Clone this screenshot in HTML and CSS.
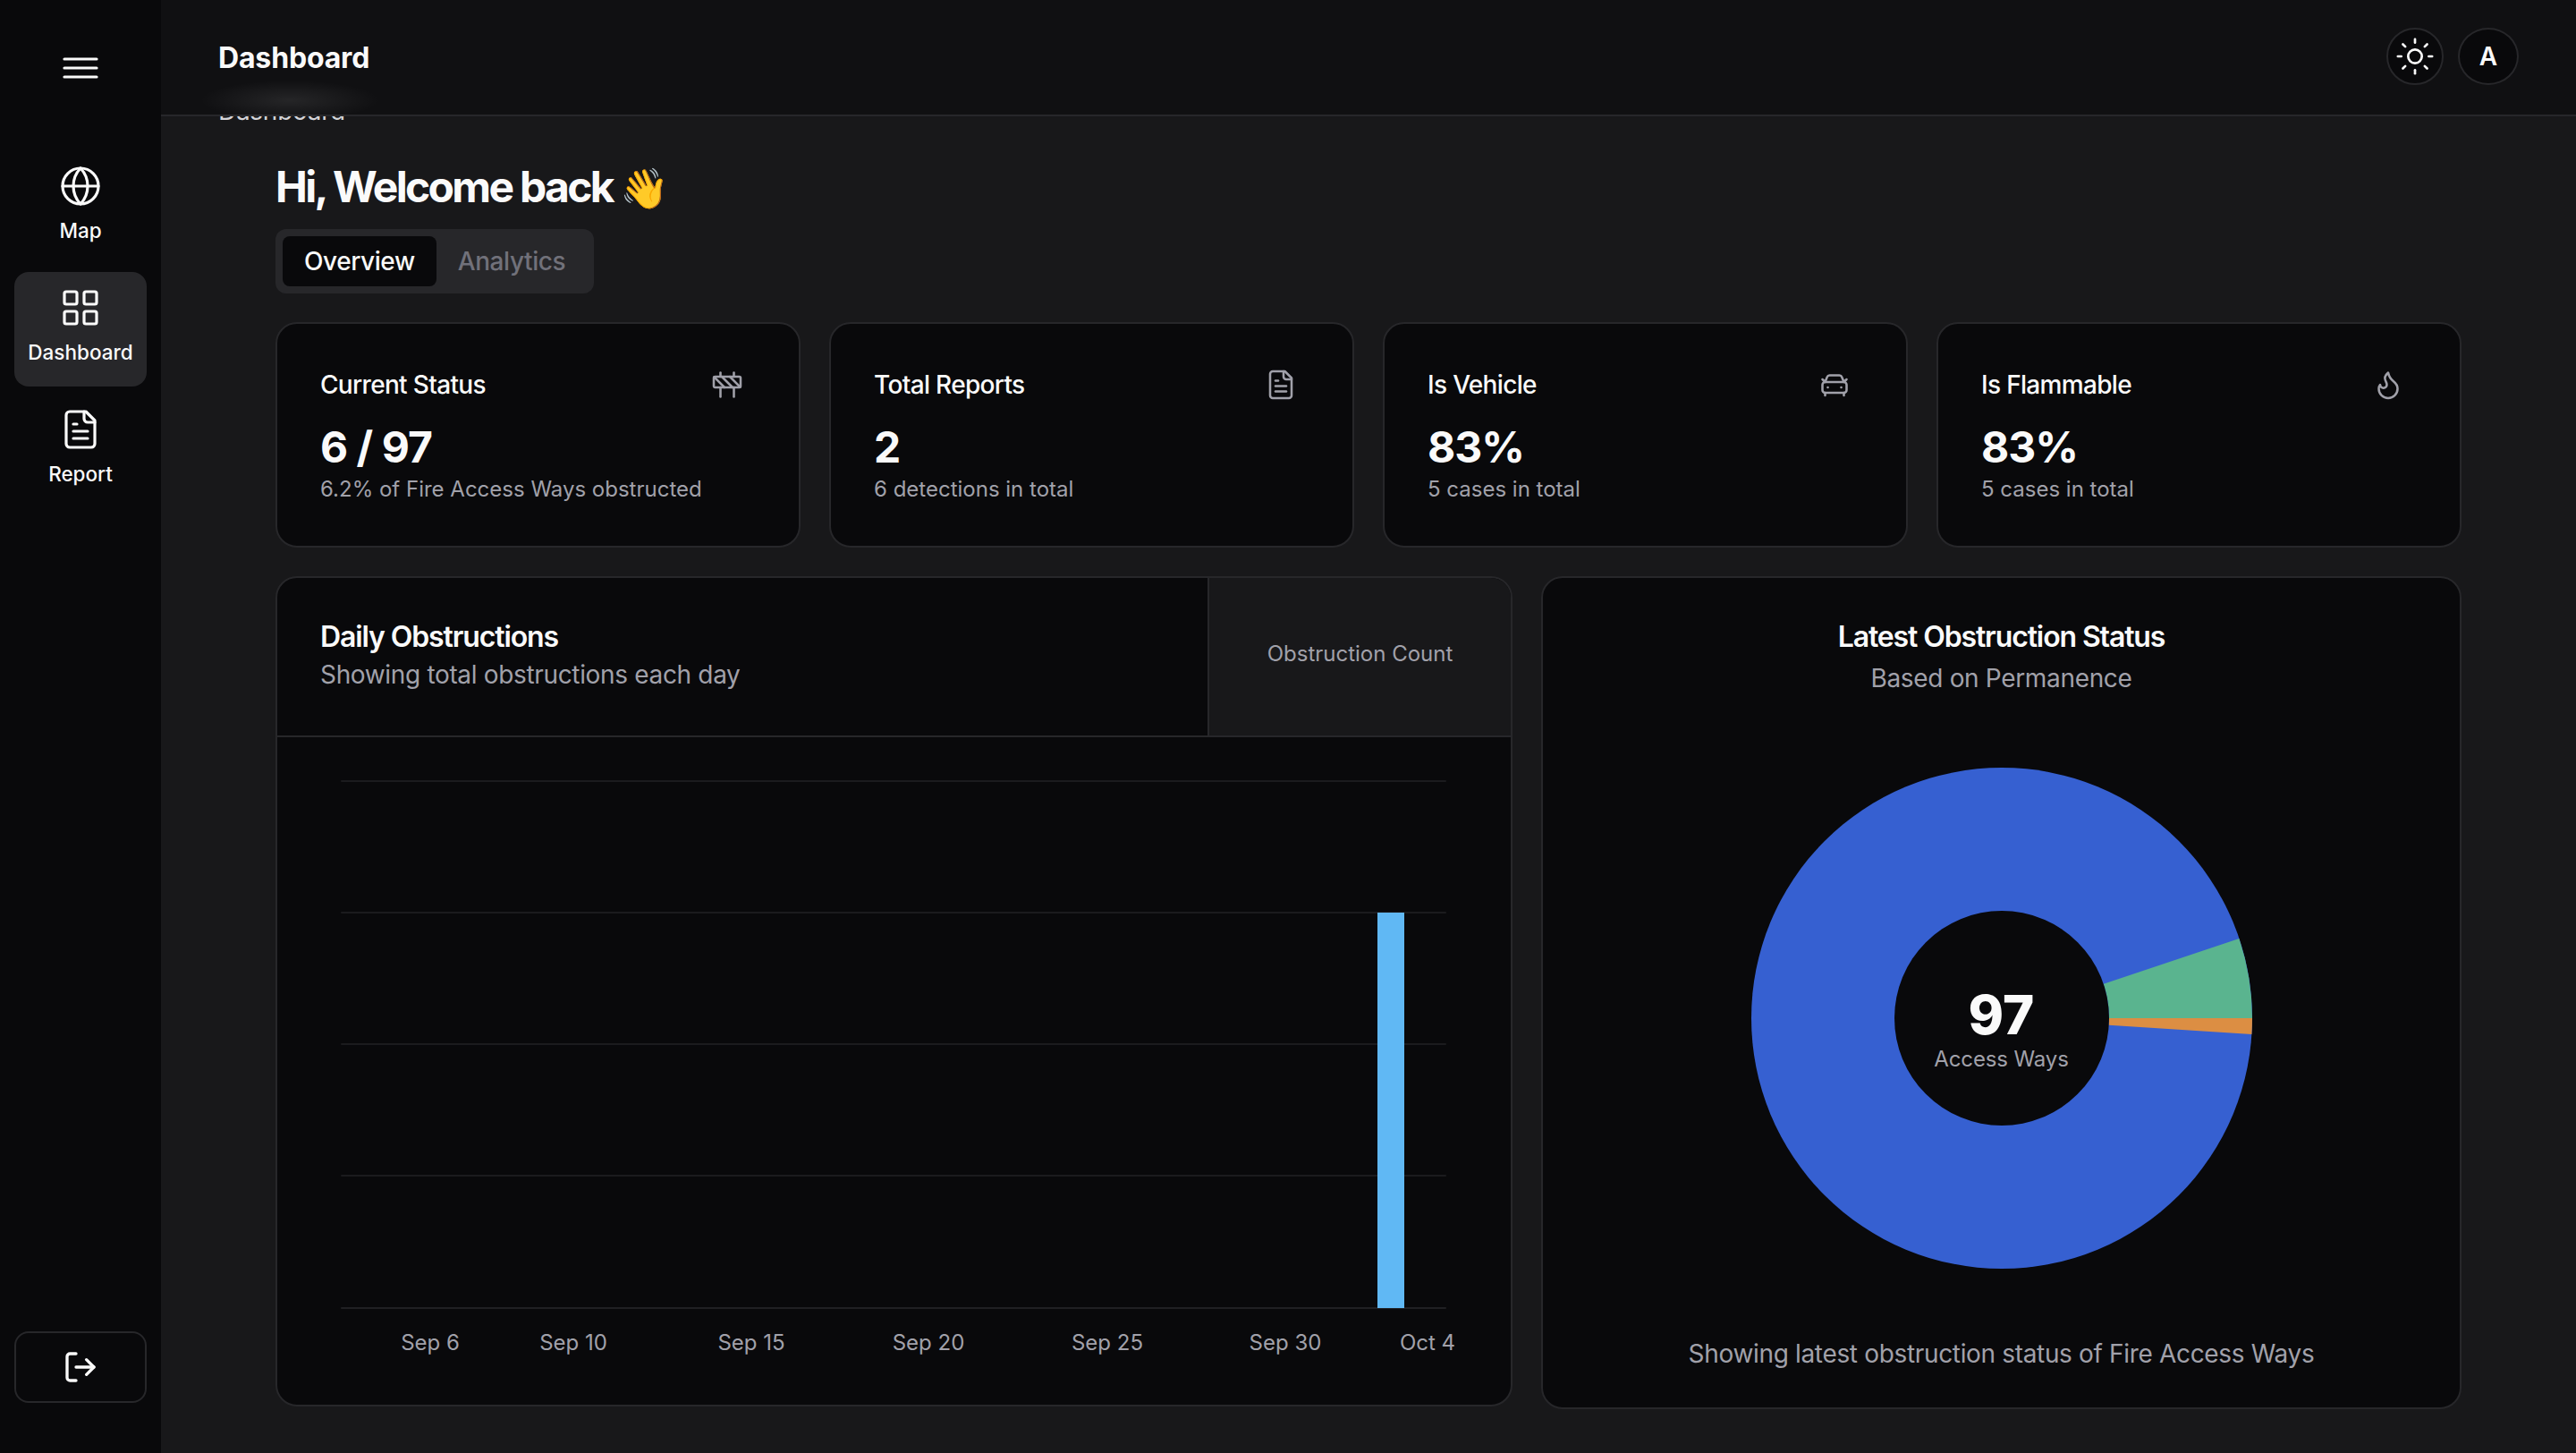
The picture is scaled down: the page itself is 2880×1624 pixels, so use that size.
FILE: index.html
```html
<!DOCTYPE html>
<html lang="en">
<head>
<meta charset="utf-8">
<title>Dashboard</title>
<link rel="stylesheet" href="styles.css">
</head>
<body>
<div class="app">
  <aside class="sidebar">
    <button class="menu-btn" aria-label="Menu">
      <svg class="icon-48" viewBox="0 0 24 24"><path d="M3 7h18M3 12h18M3 17h18"/></svg>
    </button>
    <nav class="nav">
      <a class="nav-item">
        <svg class="icon-48" viewBox="0 0 24 24"><circle cx="12" cy="12" r="10"/><path d="M12 2a14.5 14.5 0 0 0 0 20 14.5 14.5 0 0 0 0-20"/><path d="M2 12h20"/></svg>
        <span>Map</span>
      </a>
      <a class="nav-item active">
        <svg class="icon-48" viewBox="0 0 24 24"><rect width="7" height="7" x="3" y="3" rx="1"/><rect width="7" height="7" x="14" y="3" rx="1"/><rect width="7" height="7" x="14" y="14" rx="1"/><rect width="7" height="7" x="3" y="14" rx="1"/></svg>
        <span>Dashboard</span>
      </a>
      <a class="nav-item">
        <svg class="icon-48" viewBox="0 0 24 24"><path d="M15 2H6a2 2 0 0 0-2 2v16a2 2 0 0 0 2 2h12a2 2 0 0 0 2-2V7Z"/><path d="M14 2v4a2 2 0 0 0 2 2h4"/><path d="M10 9H8"/><path d="M16 13H8"/><path d="M16 17H8"/></svg>
        <span>Report</span>
      </a>
    </nav>
    <button class="logout" aria-label="Log out">
      <svg class="icon-40" viewBox="0 0 24 24"><path d="M9 21H5a2 2 0 0 1-2-2V5a2 2 0 0 1 2-2h4"/><path d="m16 17 5-5-5-5"/><path d="M21 12H9"/></svg>
    </button>
  </aside>

  <main class="main">
    <header class="topbar">
      <h2 class="topbar-title">Dashboard</h2>
      <div class="topbar-actions">
        <button class="round-btn sun" aria-label="Theme">
          <svg class="icon-46" viewBox="0 0 24 24"><circle cx="12" cy="12" r="4"/><path d="M12 2v2"/><path d="M12 20v2"/><path d="m4.93 4.93 1.41 1.41"/><path d="m17.66 17.66 1.41 1.41"/><path d="M2 12h2"/><path d="M20 12h2"/><path d="m6.34 17.66-1.41 1.41"/><path d="m19.07 4.93-1.41 1.41"/></svg>
        </button>
        <button class="round-btn avatar">A</button>
      </div>
    </header>

    <div class="crumb"><span class="crumb-text">Dashboard</span></div>

    <div class="page">
      <h1 class="welcome">Hi, Welcome back <span class="wave">👋</span></h1>

      <div class="tabs">
        <span class="tab active">Overview</span>
        <span class="tab">Analytics</span>
      </div>

      <section class="stats">
        <article class="stat">
          <div class="stat-head">
            <h3>Current Status</h3>
            <svg class="icon-36" viewBox="0 0 24 24"><rect x="2" y="6" width="20" height="8" rx="1"/><path d="M17 14v7"/><path d="M7 14v7"/><path d="M17 3v3"/><path d="M7 3v3"/><path d="M10 14 2.3 6.3"/><path d="m14 6 7.7 7.7"/><path d="m8 6 8 8"/></svg>
          </div>
          <div class="stat-value">6 / 97</div>
          <p class="stat-note">6.2% of Fire Access Ways obstructed</p>
        </article>
        <article class="stat">
          <div class="stat-head">
            <h3>Total Reports</h3>
            <svg class="icon-36" viewBox="0 0 24 24"><path d="M15 2H6a2 2 0 0 0-2 2v16a2 2 0 0 0 2 2h12a2 2 0 0 0 2-2V7Z"/><path d="M14 2v4a2 2 0 0 0 2 2h4"/><path d="M10 9H8"/><path d="M16 13H8"/><path d="M16 17H8"/></svg>
          </div>
          <div class="stat-value">2</div>
          <p class="stat-note">6 detections in total</p>
        </article>
        <article class="stat">
          <div class="stat-head">
            <h3>Is Vehicle</h3>
            <svg class="icon-36" viewBox="0 0 24 24"><path d="m21 8-2 2-1.5-3.7A2 2 0 0 0 15.646 5H8.4a2 2 0 0 0-1.903 1.257L5 10 3 8"/><path d="M7 14h.01"/><path d="M17 14h.01"/><rect width="18" height="8" x="3" y="10" rx="2"/><path d="M5 18v2"/><path d="M19 18v2"/></svg>
          </div>
          <div class="stat-value">83%</div>
          <p class="stat-note">5 cases in total</p>
        </article>
        <article class="stat">
          <div class="stat-head">
            <h3>Is Flammable</h3>
            <svg class="icon-36" viewBox="0 0 24 24"><path d="M8.5 14.5A2.5 2.5 0 0 0 11 12c0-1.38-.5-2-1-3-1.072-2.143-.224-4.054 2-6 .5 2.5 2 4.9 4 6.5 2 1.6 3 3.5 3 5.5a7 7 0 1 1-14 0c0-1.153.433-2.294 1-3a2.5 2.5 0 0 0 2.5 2.5z"/></svg>
          </div>
          <div class="stat-value">83%</div>
          <p class="stat-note">5 cases in total</p>
        </article>
      </section>

      <section class="charts">
        <article class="card bar-card">
          <div class="bar-head">
            <div class="bar-titles">
              <h3 class="card-title">Daily Obstructions</h3>
              <p class="card-sub">Showing total obstructions each day</p>
            </div>
            <div class="series-tab">Obstruction Count</div>
          </div>
          <svg class="bar-chart" viewBox="0 0 1379 745">
            <g class="grid-lines">
              <path d="M72 49H1306"/><path d="M72 196H1306"/><path d="M72 343H1306"/><path d="M72 490H1306"/>
              <path class="axis" d="M72 638H1306"/>
            </g>
            <rect class="bar" x="1230" y="196" width="30" height="442"/>
            <g class="ticks">
              <text x="171" y="685">Sep 6</text>
              <text x="331" y="685">Sep 10</text>
              <text x="530" y="685">Sep 15</text>
              <text x="728" y="685">Sep 20</text>
              <text x="928" y="685">Sep 25</text>
              <text x="1127" y="685">Sep 30</text>
              <text x="1286" y="685">Oct 4</text>
            </g>
          </svg>
        </article>

        <article class="card pie-card">
          <h3 class="card-title">Latest Obstruction Status</h3>
          <p class="card-sub">Based on Permanence</p>
          <div class="pie-wrap">
            <svg class="pie" viewBox="0 0 560 560">
              <circle class="slice-blue" cx="280" cy="280" r="280"/>
              <path class="slice-green" d="M560 280A280 280 0 0 0 545.4 190.9L393.8 241.8A120 120 0 0 1 400 280Z"/>
              <path class="slice-orange" d="M560 280A280 280 0 0 1 559.4 298.1L399.7 287.8A120 120 0 0 0 400 280Z"/>
              <circle class="pie-hole" cx="280" cy="280" r="120"/>
            </svg>
            <div class="pie-label">
              <strong>97</strong>
              <span>Access Ways</span>
            </div>
          </div>
          <p class="pie-foot">Showing latest obstruction status of Fire Access Ways</p>
        </article>
      </section>
    </div>
  </main>
</div>
</body>
</html>
```
FILE: styles.css
```css
* { box-sizing: border-box; }
html, body { margin: 0; padding: 0; height: 100%; }
body { background: #18181a; color: #fafafa; font-family: Inter, "Noto Sans", "Noto Color Emoji", sans-serif; overflow: hidden; }
h1, h2, h3, p { margin: 0; }
button { font-family: inherit; color: inherit; padding: 0; cursor: pointer; }

svg { fill: none; stroke: currentColor; stroke-linecap: round; stroke-linejoin: round; stroke-width: 1.6; display: block; flex: none; }
.icon-48 { width: 48px; height: 48px; }
.icon-46 { width: 46px; height: 46px; stroke-width: 1.4; }
.icon-40 { width: 40px; height: 40px; stroke-width: 2; }
.icon-36 { width: 36px; height: 36px; color: #a1a1aa; stroke-width: 1.7; }

.app { display: flex; width: 2880px; height: 1624px; overflow: hidden; }

.sidebar { width: 180px; flex: none; background: #09090b; display: flex; flex-direction: column; align-items: center; padding: 52px 16px 56px; }
.menu-btn { background: none; border: 0; height: 48px; width: 48px; color: #fafafa; }
.nav { display: flex; flex-direction: column; gap: 8px; width: 148px; margin-top: 68px; flex: 1; }
.nav-item { height: 128px; border-radius: 16px; display: flex; flex-direction: column; align-items: center; gap: 12px; padding-top: 16px; font-size: 22.5px; font-weight: 500; line-height: 28px; color: #fafafa; }
.nav-item.active { background: #27272a; }
.logout { width: 148px; height: 80px; border: 2px solid #27272a; border-radius: 16px; background: #09090b; display: flex; align-items: center; justify-content: center; color: #fafafa; }

.main { flex: 1; position: relative; background: #18181a; min-width: 0; }
.topbar { position: absolute; top: 0; left: 0; right: 0; height: 130px; border-bottom: 2px solid #27272a; background: #101012; display: flex; align-items: center; justify-content: space-between; padding: 0 64px 2px; z-index: 2; }
.topbar::after { content: ""; position: absolute; left: 44px; bottom: -6px; width: 200px; height: 44px; background: radial-gradient(closest-side, rgba(255, 255, 255, .09), rgba(255, 255, 255, 0)); pointer-events: none; clip-path: inset(0 0 6px 0); }
.topbar-title { margin-top: 4px; font-size: 32px; font-weight: 700; letter-spacing: -.005em; line-height: 44px; }
.topbar-actions { display: flex; gap: 16px; }
.round-btn { height: 64px; border: 2px solid #27272a; border-radius: 50%; background: #09090b; display: flex; align-items: center; justify-content: center; color: #fafafa; }
.sun { width: 64px; }
.avatar { width: 68px; font-size: 28px; font-weight: 600; }

.crumb { margin-top: 130px; height: 14px; overflow: hidden; padding-left: 64px; }
.crumb-text { display: block; margin-top: -26px; font-size: 28px; line-height: 40px; color: #d4d4d8; letter-spacing: -.01em; }

.page { padding: 0 128px; }
.welcome { margin-top: 35px; font-size: 48px; line-height: 60px; font-weight: 700; letter-spacing: -.056em; }
.wave { letter-spacing: 0; font-size: 44px; }

.tabs { display: inline-flex; align-items: center; height: 72px; padding: 8px; margin-top: 16px; border-radius: 12px; background: #27272a; font-size: 28px; font-weight: 500; color: #71717a; vertical-align: top; letter-spacing: -.015em; }
.tab { height: 56px; padding: 0 24px; line-height: 56px; border-radius: 8px; }
.tab.active { background: #09090b; color: #fafafa; }

.stats { display: grid; grid-template-columns: repeat(4, 1fr); gap: 32px; margin-top: 32px; }
.stat { height: 252px; background: #09090b; border: 2px solid #27272a; border-radius: 24px; padding: 48px 62px 0 48px; }
.stat-head { display: flex; justify-content: space-between; align-items: center; height: 40px; }
.stat-head h3 { font-size: 28px; line-height: 40px; font-weight: 500; letter-spacing: -.024em; }
.stat-value { margin-top: 22px; font-size: 48px; line-height: 56px; font-weight: 700; letter-spacing: -.02em; }
.stat-note { margin-top: 3px; font-size: 24px; line-height: 32px; color: #a1a1aa; }

.charts { display: grid; grid-template-columns: 1383px 1fr; gap: 32px; margin-top: 32px; align-items: start; }
.card { background: #09090b; border: 2px solid #27272a; border-radius: 24px; overflow: hidden; }
.bar-card { height: 928px; }
.bar-head { display: flex; height: 178px; border-bottom: 2px solid #27272a; }
.bar-titles { flex: 1; padding: 46px 48px 0; }
.card-title { font-size: 32px; line-height: 40px; font-weight: 600; letter-spacing: -.035em; }
.card-sub { margin-top: 2px; font-size: 28px; line-height: 40px; color: #a1a1aa; letter-spacing: -.012em; }
.series-tab { width: 339px; border-left: 2px solid #27272a; background: #18181a; color: #a1a1aa; font-size: 24px; display: flex; align-items: center; justify-content: center; padding-bottom: 8px; }

.bar-chart { width: 1379px; height: 745px; stroke: none; }
.grid-lines path { stroke: #1b1b1e; stroke-width: 2; }
.grid-lines .axis { stroke: #202023; }
.bar { fill: #60b8f4; }
.ticks text { fill: #a1a1aa; stroke: none; font-size: 24px; text-anchor: middle; font-family: Inter, sans-serif; }

.pie-card { height: 931px; padding: 46px 48px 0; text-align: center; display: flex; flex-direction: column; align-items: center; }
.pie-card .card-sub { margin-top: 6px; }
.pie-wrap { position: relative; width: 560px; height: 560px; margin-top: 80px; }
.pie { width: 560px; height: 560px; stroke: none; }
.slice-blue { fill: #3660d1; }
.slice-green { fill: #5ab48f; }
.slice-orange { fill: #dc8e43; }
.pie-hole { fill: #09090b; }
.pie-label { position: absolute; inset: 0; padding-top: 20px; display: flex; flex-direction: column; align-items: center; justify-content: center; }
.pie-label strong { font-size: 60px; line-height: 72px; font-weight: 800; }
.pie-label span { font-size: 24px; line-height: 28px; color: #a1a1aa; letter-spacing: -.005em; }
.pie-foot { margin-top: 75px; font-size: 28px; line-height: 40px; color: #a1a1aa; letter-spacing: -.012em; }
```
